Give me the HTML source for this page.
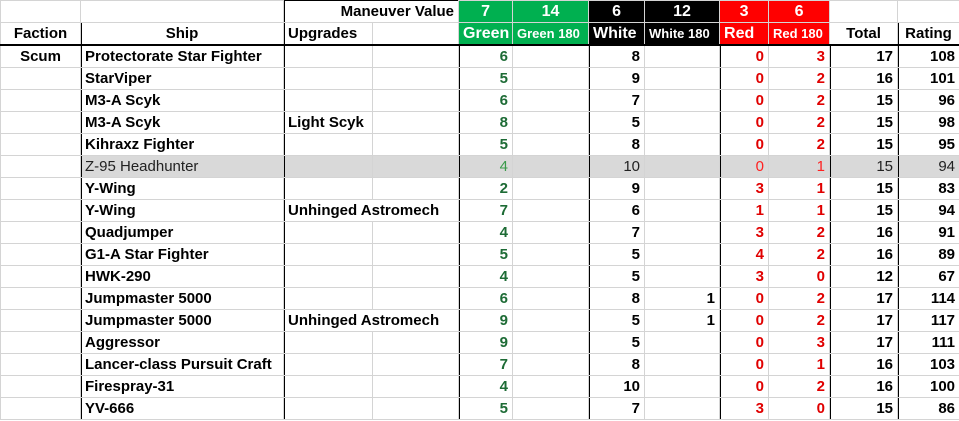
<!DOCTYPE html>
<html><head><style>
body{margin:0;background:#fff;width:959px;height:421px;overflow:hidden}
table{border-collapse:collapse;table-layout:fixed;width:959px;font-family:"Liberation Sans",Arial,sans-serif;font-weight:bold;font-size:15px;position:absolute;left:0;top:0}
td{border:1px solid #d4d4d4;height:20px;padding:1px 4px 0 4px;white-space:nowrap;overflow:hidden;line-height:20px}
td.n{text-align:right}
td.up{overflow:visible;border-right:hidden}
td.nl{border-left:hidden}
.g{color:#1d6b35}.r{color:#e00000}
.bl{box-shadow:inset 1px 0 0 #000}
.hd td{border-bottom:2px solid #000}
.gr{background:#00b050;color:#fff}.bk{background:#000;color:#fff}.rd{background:#ff0000;color:#fff}
.big{font-size:16px}
.sm{font-size:13px;font-weight:bold}
tr.z td{background:#d9d9d9;font-weight:normal;color:#222}
tr.z td.g{color:#3a9a4a}tr.z td.r{color:#ff2020}
tr.dl td{border-top:1px dotted #000}
</style></head><body>
<table>
<colgroup><col style="width:80px"><col style="width:203px"><col style="width:89px"><col style="width:86px"><col style="width:54px"><col style="width:76px"><col style="width:56px"><col style="width:75px"><col style="width:49px"><col style="width:61px"><col style="width:68px"><col style="width:62px"></colgroup>
<tr><td></td><td></td><td colspan="2" class="n bl" style="border-top:1px solid #000">Maneuver Value</td><td class="gr big" style="text-align:center">7</td><td class="gr big" style="text-align:center">14</td><td class="bk big" style="text-align:center">6</td><td class="bk big" style="text-align:center">12</td><td class="rd big" style="text-align:center">3</td><td class="rd big" style="text-align:center">6</td><td></td><td></td></tr>
<tr class="hd"><td style="text-align:center">Faction</td><td class="bl" style="text-align:center">Ship</td><td class="bl">Upgrades</td><td></td><td class="gr big">Green</td><td class="gr sm">Green 180</td><td class="bk big">White</td><td class="bk sm">White 180</td><td class="rd big">Red</td><td class="rd sm">Red 180</td><td style="text-align:center">Total</td><td class="bl" style="text-align:center">Rating</td></tr>
<tr><td style="text-align:center">Scum</td><td class="bl">Protectorate Star Fighter</td><td class="bl"></td><td></td><td class="n g bl">6</td><td></td><td class="n bl">8</td><td></td><td class="n r bl">0</td><td class="n r">3</td><td class="n bl">17</td><td class="n bl">108</td></tr>
<tr><td></td><td class="bl">StarViper</td><td class="bl"></td><td></td><td class="n g bl">5</td><td></td><td class="n bl">9</td><td></td><td class="n r bl">0</td><td class="n r">2</td><td class="n bl">16</td><td class="n bl">101</td></tr>
<tr><td></td><td class="bl">M3-A Scyk</td><td class="bl"></td><td></td><td class="n g bl">6</td><td></td><td class="n bl">7</td><td></td><td class="n r bl">0</td><td class="n r">2</td><td class="n bl">15</td><td class="n bl">96</td></tr>
<tr><td></td><td class="bl">M3-A Scyk</td><td class="bl">Light Scyk</td><td></td><td class="n g bl">8</td><td></td><td class="n bl">5</td><td></td><td class="n r bl">0</td><td class="n r">2</td><td class="n bl">15</td><td class="n bl">98</td></tr>
<tr><td></td><td class="bl">Kihraxz Fighter</td><td class="bl"></td><td></td><td class="n g bl">5</td><td></td><td class="n bl">8</td><td></td><td class="n r bl">0</td><td class="n r">2</td><td class="n bl">15</td><td class="n bl">95</td></tr>
<tr class="z"><td style="background:#fff"></td><td class="bl">Z-95 Headhunter</td><td class="bl"></td><td></td><td class="n g bl">4</td><td></td><td class="n bl">10</td><td></td><td class="n r bl">0</td><td class="n r">1</td><td class="n bl">15</td><td class="n bl">94</td></tr>
<tr><td></td><td class="bl">Y-Wing</td><td class="bl"></td><td></td><td class="n g bl">2</td><td></td><td class="n bl">9</td><td></td><td class="n r bl">3</td><td class="n r">1</td><td class="n bl">15</td><td class="n bl">83</td></tr>
<tr><td></td><td class="bl">Y-Wing</td><td class="bl up">Unhinged Astromech</td><td class="nl"></td><td class="n g bl">7</td><td></td><td class="n bl">6</td><td></td><td class="n r bl">1</td><td class="n r">1</td><td class="n bl">15</td><td class="n bl">94</td></tr>
<tr><td></td><td class="bl">Quadjumper</td><td class="bl"></td><td></td><td class="n g bl">4</td><td></td><td class="n bl">7</td><td></td><td class="n r bl">3</td><td class="n r">2</td><td class="n bl">16</td><td class="n bl">91</td></tr>
<tr><td></td><td class="bl">G1-A Star Fighter</td><td class="bl"></td><td></td><td class="n g bl">5</td><td></td><td class="n bl">5</td><td></td><td class="n r bl">4</td><td class="n r">2</td><td class="n bl">16</td><td class="n bl">89</td></tr>
<tr><td></td><td class="bl">HWK-290</td><td class="bl"></td><td></td><td class="n g bl">4</td><td></td><td class="n bl">5</td><td></td><td class="n r bl">3</td><td class="n r">0</td><td class="n bl">12</td><td class="n bl">67</td></tr>
<tr class="dl"><td style="border-top:1px solid #d4d4d4"></td><td class="bl">Jumpmaster 5000</td><td class="bl"></td><td></td><td class="n g bl">6</td><td></td><td class="n bl">8</td><td class="n">1</td><td class="n r bl">0</td><td class="n r">2</td><td class="n bl">17</td><td class="n bl">114</td></tr>
<tr><td></td><td class="bl">Jumpmaster 5000</td><td class="bl up">Unhinged Astromech</td><td class="nl"></td><td class="n g bl">9</td><td></td><td class="n bl">5</td><td class="n">1</td><td class="n r bl">0</td><td class="n r">2</td><td class="n bl">17</td><td class="n bl">117</td></tr>
<tr><td></td><td class="bl">Aggressor</td><td class="bl"></td><td></td><td class="n g bl">9</td><td></td><td class="n bl">5</td><td></td><td class="n r bl">0</td><td class="n r">3</td><td class="n bl">17</td><td class="n bl">111</td></tr>
<tr><td></td><td class="bl">Lancer-class Pursuit Craft</td><td class="bl"></td><td></td><td class="n g bl">7</td><td></td><td class="n bl">8</td><td></td><td class="n r bl">0</td><td class="n r">1</td><td class="n bl">16</td><td class="n bl">103</td></tr>
<tr><td></td><td class="bl">Firespray-31</td><td class="bl"></td><td></td><td class="n g bl">4</td><td></td><td class="n bl">10</td><td></td><td class="n r bl">0</td><td class="n r">2</td><td class="n bl">16</td><td class="n bl">100</td></tr>
<tr><td></td><td class="bl">YV-666</td><td class="bl"></td><td></td><td class="n g bl">5</td><td></td><td class="n bl">7</td><td></td><td class="n r bl">3</td><td class="n r">0</td><td class="n bl">15</td><td class="n bl">86</td></tr>
</table>
</body></html>
